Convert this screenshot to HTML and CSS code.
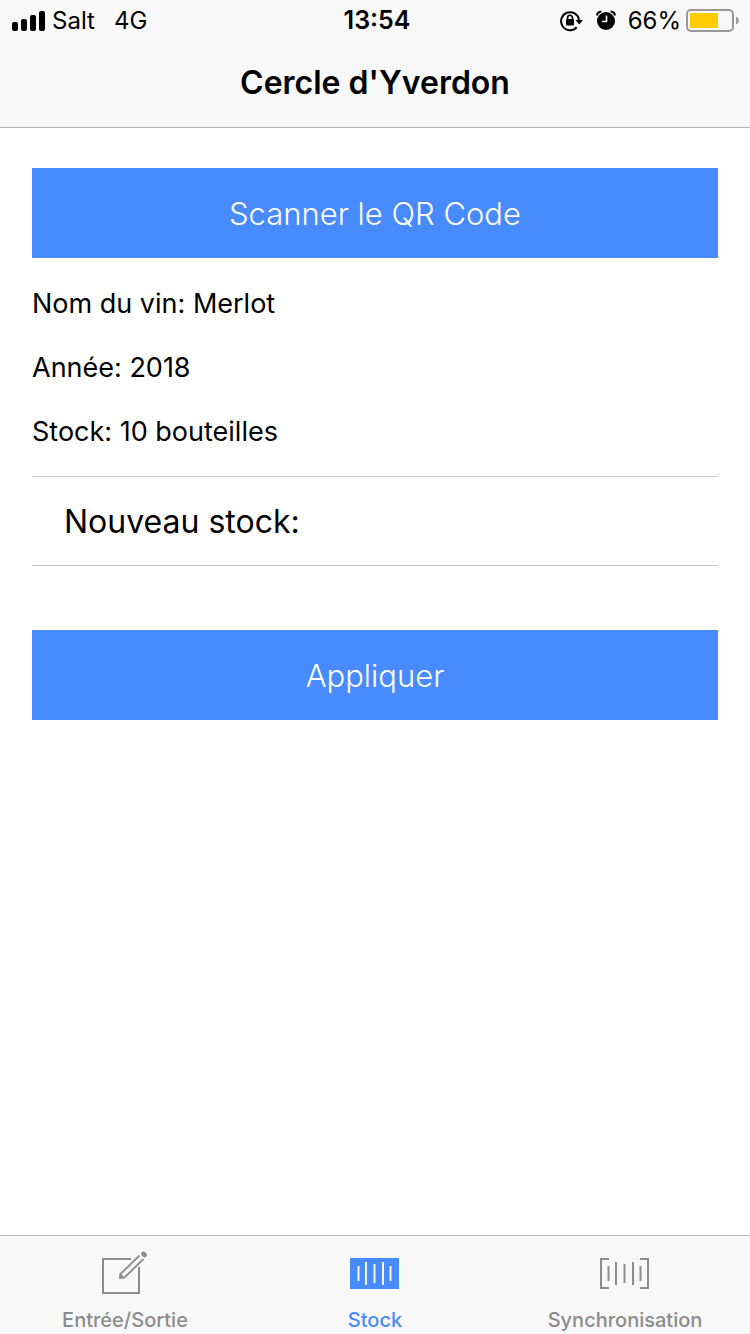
FILE: index.html
```html
<!DOCTYPE html>
<html lang="fr">
<head>
<meta charset="utf-8">
<meta name="viewport" content="width=device-width, initial-scale=1">
<title>Cercle d'Yverdon</title>
<link rel="stylesheet" href="styles.css">
</head>
<body>
<div class="app">
  <header class="header">
    <div class="status">
      <div class="status-left">
        <svg class="signal" width="34" height="20" viewBox="0 0 34 20" aria-hidden="true">
          <rect x="0" y="11" width="6" height="9" rx="2"/>
          <rect x="9" y="8" width="6" height="12" rx="2"/>
          <rect x="18" y="4" width="6" height="16" rx="2"/>
          <rect x="27" y="0" width="6" height="20" rx="2"/>
        </svg>
        <span>Salt</span>
        <span class="network">4G</span>
      </div>
      <time class="clock">13:54</time>
      <div class="status-right">
        <svg width="24" height="22" viewBox="0 0 24 22" aria-hidden="true">
          <path d="M16.700 17.300A9 9 0 1 1 19 10" fill="none" stroke="#000" stroke-width="2"/>
          <path d="M15.500 10h7.500l-3.700 4.500z"/>
          <path d="M7.600 9.500V7.700a2.400 2.400 0 0 1 4.800 0V9.500" fill="none" stroke="#000" stroke-width="1.600"/>
          <rect x="6" y="9" width="8" height="6.500" rx="1"/>
        </svg>
        <svg class="alarm" width="20" height="22" viewBox="0 0 20 22" aria-hidden="true">
          <circle cx="10" cy="11" r="9"/>
          <path d="M1 5.500Q1.500 1.800 5.500 1.500M19 5.500Q18.500 1.800 14.500 1.500" fill="none" stroke="#000" stroke-width="2.200"/>
          <path d="M10.500 5.500V11.500H6" fill="none" stroke="#f8f8f8" stroke-width="1.600"/>
        </svg>
        <span>66%</span>
        <svg class="battery" width="54" height="24" viewBox="0 0 54 24" aria-hidden="true">
          <rect x="1" y="1" width="46" height="21" rx="4" fill="none" stroke="#999" stroke-width="2"/>
          <rect x="4" y="4" width="28" height="15" rx="1" fill="#ffcc00"/>
          <path d="M50 7.500q3 1.500 3 4t-3 4z" fill="#999"/>
        </svg>
      </div>
    </div>
    <h1 class="title">Cercle d'Yverdon</h1>
  </header>

  <main class="content">
    <button class="button" type="button">Scanner le QR Code</button>
    <div class="details">
      <p>Nom du vin: Merlot</p>
      <p>Année: 2018</p>
      <p>Stock: 10 bouteilles</p>
    </div>
    <div class="field">
      <label for="new-stock">Nouveau stock:</label>
      <input id="new-stock" type="text" inputmode="numeric">
    </div>
    <button class="button" type="button">Appliquer</button>
  </main>

  <nav class="tabs">
    <a class="tab" href="#entree">
      <svg width="50" height="48" viewBox="0 0 50 48" fill="none" stroke="currentColor" aria-hidden="true">
        <path d="M31 9H3V43H39V17" stroke-width="2"/>
        <path d="M20.500 24L39.500 5.500M24.500 27.500L43.500 9" stroke-width="1.800"/>
        <path d="M19.500 28.500l.5-5 4.500 4.500z" fill="currentColor" stroke-width="1"/>
        <path d="M41 3q2-2.500 4.500-.5t.5 4.500l-2 .5-3-3z" fill="currentColor" stroke="none"/>
      </svg>
      <span>Entrée/Sortie</span>
    </a>
    <a class="tab tab-active" href="#stock" aria-current="page">
      <svg width="50" height="48" viewBox="0 0 50 48" aria-hidden="true">
        <rect x="0" y="8" width="49" height="31" fill="currentColor"/>
        <path d="M8.500 16V31M16 12V35M24.500 14V33M33 12V35M40.500 16V31" stroke="#f8f8f8" stroke-width="2"/>
      </svg>
      <span>Stock</span>
    </a>
    <a class="tab" href="#synchronisation">
      <svg width="50" height="48" viewBox="0 0 50 48" fill="none" stroke="currentColor" stroke-width="2" aria-hidden="true">
        <path d="M9 9H1V38H9M40 9H48V38H40"/>
        <path d="M8.500 16V31M16 12V35M24.500 14V33M33 12V35M40.500 16V31"/>
      </svg>
      <span>Synchronisation</span>
    </a>
  </nav>
</div>
</body>
</html>
```
FILE: styles.css
```css
* {
  box-sizing: border-box;
}

body {
  margin: 0;
  background: #fff;
  color: #000;
  font-family: Inter, "Liberation Sans", sans-serif;
}

svg {
  display: block;
  flex: none;
}

.app {
  display: flex;
  flex-direction: column;
  min-height: 100vh;
}

.header {
  background: #f8f8f8;
  border-bottom: 1px solid #b2b2b2;
}

.status {
  display: grid;
  grid-template-columns: 1fr auto 1fr;
  align-items: center;
  height: 41px;
  padding: 0 10px 0 12px;
  font-size: 24px;
  line-height: 41px;
}

.status-left,
.status-right {
  display: flex;
  align-items: center;
}

.status-right {
  justify-content: flex-end;
}

.signal {
  margin-right: 6px;
}

.network {
  margin-left: 19px;
}

.clock {
  padding-left: 2px;
  font-size: 25px;
  font-weight: 600;
}

.alarm {
  margin: 0 12px;
}

.battery {
  margin-left: 5px;
}

.title {
  margin: 0;
  padding: 20px 32px 22px;
  font-size: 32px;
  font-weight: 600;
  line-height: 44px;
  text-align: center;
}

.content {
  flex: 1;
  padding: 40px 32px;
}

.button {
  display: block;
  width: 100%;
  height: 90px;
  border: 0;
  background: #488aff;
  color: #fff;
  font-family: inherit;
  font-size: 31px;
  font-weight: 300;
}

.details {
  padding: 14px 0 12px;
  font-size: 27px;
  line-height: 64px;
}

.details p {
  margin: 0;
}

.field {
  display: flex;
  align-items: center;
  height: 90px;
  margin-bottom: 64px;
  padding: 0 32px;
  border: solid #c8c7cc;
  border-width: 1px 0;
  font-size: 32px;
}

.field input {
  flex: 1;
  min-width: 0;
  margin-left: 16px;
  border: 0;
  outline: 0;
  background: transparent;
  font: inherit;
}

.tabs {
  display: grid;
  grid-template-columns: repeat(3, 1fr);
  padding-bottom: 2px;
  border-top: 1px solid #b2b2b2;
  background: #f8f8f8;
}

.tab {
  display: flex;
  flex-direction: column;
  align-items: center;
  padding-top: 14px;
  color: #8c8c8c;
  font-size: 20px;
  font-weight: 500;
  line-height: 24px;
  text-decoration: none;
}

.tab span {
  margin-top: 10px;
}

.tab-active {
  color: #488aff;
}
```
